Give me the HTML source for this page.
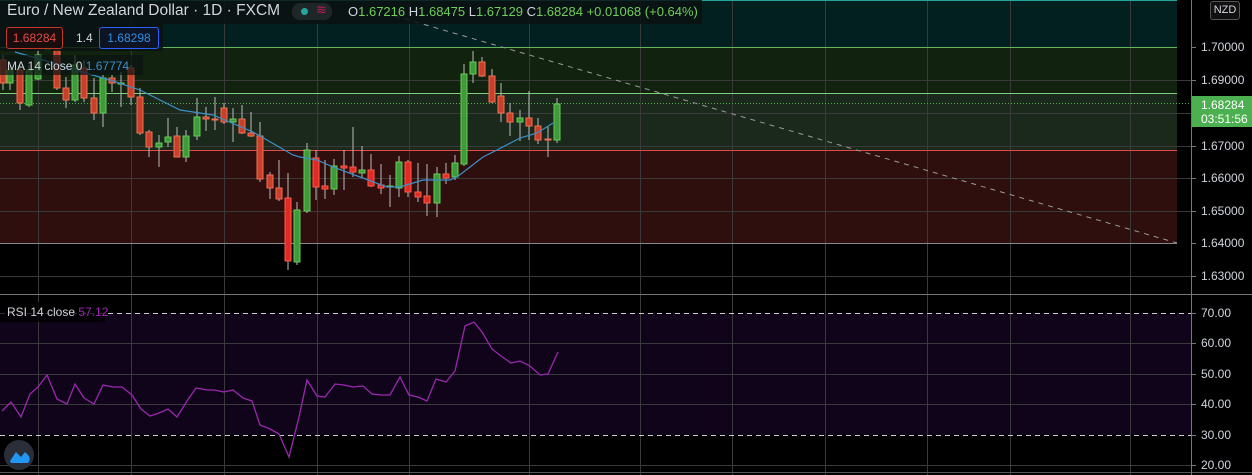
<!DOCTYPE html>
<html><head><meta charset="utf-8"><style>
html,body{margin:0;padding:0;background:#000;width:1252px;height:475px;overflow:hidden;font-family:"Liberation Sans",sans-serif}
svg{position:absolute;left:0;top:0}
.t{position:absolute;white-space:nowrap}
</style></head><body>
<svg width="1252" height="475" xmlns="http://www.w3.org/2000/svg">
<rect x="0" y="0" width="1177" height="47" fill="#032020"/>
<rect x="0" y="47" width="1177" height="46" fill="#11220f"/>
<rect x="0" y="93" width="1177" height="57" fill="#1a291b"/>
<rect x="0" y="150" width="1177" height="93" fill="#2e0f0e"/>
<rect x="0" y="313" width="1191" height="122" fill="#0f0419"/>
<g stroke="#3a3a3a" stroke-width="1">
<line x1="0" y1="80.5" x2="1191" y2="80.5"/><line x1="0" y1="113.5" x2="1191" y2="113.5"/>
<line x1="0" y1="146.5" x2="1191" y2="146.5"/><line x1="0" y1="178.5" x2="1191" y2="178.5"/>
<line x1="0" y1="211.5" x2="1191" y2="211.5"/><line x1="0" y1="276.5" x2="1191" y2="276.5"/>
<line x1="0" y1="343.5" x2="1191" y2="343.5"/><line x1="0" y1="374.5" x2="1191" y2="374.5"/>
<line x1="0" y1="404.5" x2="1191" y2="404.5"/><line x1="0" y1="465.5" x2="1191" y2="465.5"/>
<line x1="38.5" y1="0" x2="38.5" y2="475"/><line x1="131.5" y1="0" x2="131.5" y2="475"/>
<line x1="224.5" y1="0" x2="224.5" y2="475"/><line x1="317.5" y1="0" x2="317.5" y2="475"/>
<line x1="409.5" y1="0" x2="409.5" y2="475"/><line x1="529.5" y1="0" x2="529.5" y2="475"/>
<line x1="640.5" y1="0" x2="640.5" y2="475"/><line x1="732.5" y1="0" x2="732.5" y2="475"/>
<line x1="825.5" y1="0" x2="825.5" y2="475"/><line x1="927.5" y1="0" x2="927.5" y2="475"/>
<line x1="1010.5" y1="0" x2="1010.5" y2="475"/><line x1="1130.5" y1="0" x2="1130.5" y2="475"/>
</g>
<line x1="0" y1="0.5" x2="1177" y2="0.5" stroke="#26a69a"/>
<line x1="0" y1="47.5" x2="1177" y2="47.5" stroke="#5fb85c"/>
<line x1="0" y1="93.5" x2="1177" y2="93.5" stroke="#7fcf7a"/>
<line x1="0" y1="150.5" x2="1177" y2="150.5" stroke="#e04b45"/>
<line x1="0" y1="243.5" x2="1177" y2="243.5" stroke="#888"/>
<line x1="0" y1="294.5" x2="1252" y2="294.5" stroke="#777"/>
<line x1="0" y1="472.5" x2="1252" y2="472.5" stroke="#555"/>
<line x1="1191.5" y1="0" x2="1191.5" y2="475" stroke="#777"/>
<line x1="0" y1="313.5" x2="1191" y2="313.5" stroke="#ccc" stroke-dasharray="5,4"/>
<line x1="0" y1="435.5" x2="1191" y2="435.5" stroke="#ccc" stroke-dasharray="5,4"/>
<line x1="0" y1="103.5" x2="1191" y2="103.5" stroke="#4caf50" stroke-dasharray="1,2"/>
<line x1="395" y1="16" x2="1177" y2="243" stroke="#999" stroke-dasharray="5,5"/>
<g stroke="#777"><line x1="1191" y1="47.5" x2="1196" y2="47.5"/><line x1="1191" y1="80.5" x2="1196" y2="80.5"/><line x1="1191" y1="146.5" x2="1196" y2="146.5"/><line x1="1191" y1="178.5" x2="1196" y2="178.5"/><line x1="1191" y1="211.5" x2="1196" y2="211.5"/><line x1="1191" y1="243.5" x2="1196" y2="243.5"/><line x1="1191" y1="276.5" x2="1196" y2="276.5"/><line x1="1191" y1="313.5" x2="1196" y2="313.5"/><line x1="1191" y1="343.5" x2="1196" y2="343.5"/><line x1="1191" y1="374.5" x2="1196" y2="374.5"/><line x1="1191" y1="404.5" x2="1196" y2="404.5"/><line x1="1191" y1="435.5" x2="1196" y2="435.5"/><line x1="1191" y1="465.5" x2="1196" y2="465.5"/></g>
<g stroke="#bbb" stroke-width="1">
<line x1="3" y1="55" x2="3" y2="90"/><line x1="10" y1="65" x2="10" y2="90"/><line x1="20" y1="65" x2="20" y2="110"/><line x1="29" y1="65" x2="29" y2="107"/><line x1="38" y1="50" x2="38" y2="80"/><line x1="57" y1="45" x2="57" y2="90"/><line x1="66" y1="77" x2="66" y2="108"/><line x1="75" y1="55" x2="75" y2="102"/><line x1="84" y1="60" x2="84" y2="102"/><line x1="94" y1="78" x2="94" y2="120"/><line x1="103" y1="75" x2="103" y2="127"/><line x1="112" y1="75" x2="112" y2="92"/><line x1="121" y1="72" x2="121" y2="107"/><line x1="131" y1="65" x2="131" y2="105"/><line x1="140" y1="88" x2="140" y2="135"/><line x1="149" y1="130" x2="149" y2="157"/><line x1="159" y1="135" x2="159" y2="167"/><line x1="168" y1="118" x2="168" y2="147"/><line x1="177" y1="127" x2="177" y2="157"/><line x1="186" y1="130" x2="186" y2="162"/><line x1="197" y1="98" x2="197" y2="140"/><line x1="206" y1="107" x2="206" y2="131"/><line x1="215" y1="97" x2="215" y2="130"/><line x1="224" y1="103" x2="224" y2="124"/><line x1="233" y1="108" x2="233" y2="142"/><line x1="242" y1="105" x2="242" y2="134"/><line x1="251" y1="112" x2="251" y2="137"/><line x1="260" y1="122" x2="260" y2="182"/><line x1="270" y1="172" x2="270" y2="199"/><line x1="279" y1="160" x2="279" y2="201"/><line x1="288" y1="173" x2="288" y2="270"/>
<line x1="297" y1="202" x2="297" y2="265"/><line x1="307" y1="143" x2="307" y2="213"/><line x1="316" y1="150" x2="316" y2="200"/><line x1="325" y1="160" x2="325" y2="199"/><line x1="334" y1="159" x2="334" y2="195"/><line x1="344" y1="150" x2="344" y2="190"/><line x1="353" y1="127" x2="353" y2="177"/><line x1="362" y1="146" x2="362" y2="178"/><line x1="371" y1="154" x2="371" y2="187"/><line x1="381" y1="164" x2="381" y2="194"/><line x1="390" y1="175" x2="390" y2="207"/><line x1="399" y1="156" x2="399" y2="197"/><line x1="408" y1="160" x2="408" y2="197"/><line x1="418" y1="163" x2="418" y2="202"/><line x1="427" y1="164" x2="427" y2="216"/><line x1="437" y1="167" x2="437" y2="217"/><line x1="446" y1="163" x2="446" y2="184"/><line x1="455" y1="155" x2="455" y2="180"/><line x1="464" y1="64" x2="464" y2="166"/><line x1="473" y1="51" x2="473" y2="83"/><line x1="482" y1="57" x2="482" y2="77"/><line x1="492" y1="69" x2="492" y2="103"/><line x1="501" y1="83" x2="501" y2="122"/><line x1="510" y1="103" x2="510" y2="136"/><line x1="520" y1="110" x2="520" y2="141"/><line x1="529" y1="91" x2="529" y2="140"/><line x1="538" y1="118" x2="538" y2="144"/><line x1="548" y1="127" x2="548" y2="157"/><line x1="557" y1="98" x2="557" y2="143"/>
</g>
<g stroke-width="1">
<g fill="#c8402c" stroke="#f07050">
<rect x="0" y="60" width="6" height="23"/><rect x="17" y="70" width="6" height="33"/><rect x="54" y="50" width="6" height="38"/><rect x="63" y="88" width="6" height="12"/><rect x="81" y="68" width="6" height="30"/><rect x="91" y="98" width="6" height="15"/><rect x="109" y="78" width="6" height="5"/><rect x="128" y="68" width="6" height="29"/><rect x="137" y="97" width="6" height="36"/><rect x="146" y="132" width="6" height="15"/><rect x="174" y="136" width="6" height="21"/><rect x="203" y="117" width="6" height="2"/><rect x="212" y="119" width="6" height="1"/><rect x="221" y="108" width="6" height="14"/><rect x="239" y="119" width="6" height="14"/><rect x="248" y="133" width="6" height="3"/><rect x="257" y="136" width="6" height="43"/><rect x="267" y="175" width="6" height="13"/><rect x="276" y="188" width="6" height="11"/>
</g>
<g fill="#e02a22" stroke="#ff5a4a">
<rect x="285" y="198" width="6" height="63"/><rect x="313" y="158" width="6" height="29"/><rect x="322" y="186" width="6" height="3"/><rect x="341" y="166" width="6" height="2"/><rect x="350" y="167" width="6" height="5"/><rect x="368" y="170" width="6" height="16"/><rect x="378" y="185" width="6" height="3"/><rect x="405" y="162" width="6" height="30"/><rect x="415" y="192" width="6" height="5"/><rect x="424" y="196" width="6" height="7"/><rect x="443" y="174" width="6" height="4"/>
</g>
<g fill="#c8402c" stroke="#f07050">
<rect x="479" y="62" width="6" height="14"/><rect x="489" y="76" width="6" height="26"/><rect x="498" y="96" width="6" height="17"/><rect x="507" y="113" width="6" height="9"/><rect x="526" y="118" width="6" height="8"/><rect x="535" y="126" width="6" height="14"/><rect x="545" y="139" width="6" height="1"/>
</g>
<g fill="#3f9a3a" stroke="#66cc55">
<rect x="7" y="70" width="6" height="13"/><rect x="26" y="70" width="6" height="35"/><rect x="35" y="55" width="6" height="24"/><rect x="45" y="30" width="6" height="20"/><rect x="72" y="65" width="6" height="35"/><rect x="100" y="78" width="6" height="35"/><rect x="118" y="83" width="6" height="1"/><rect x="156" y="143" width="6" height="4"/><rect x="165" y="137" width="6" height="5"/><rect x="183" y="136" width="6" height="21"/><rect x="194" y="117" width="6" height="19"/><rect x="230" y="119" width="6" height="3"/>
<rect x="294" y="210" width="6" height="52"/><rect x="304" y="150" width="6" height="61"/><rect x="331" y="166" width="6" height="23"/><rect x="359" y="170" width="6" height="3"/><rect x="387" y="186" width="6" height="1"/><rect x="396" y="162" width="6" height="26"/><rect x="434" y="174" width="6" height="29"/><rect x="452" y="163" width="6" height="14"/><rect x="461" y="74" width="6" height="90"/><rect x="470" y="62" width="6" height="12"/><rect x="517" y="118" width="6" height="4"/><rect x="554" y="104" width="6" height="36"/>
</g>
</g>
<polyline fill="none" stroke="#3c8fc9" stroke-width="1.2" points="15,52 50,62 75,70 110,80 140,90 180,110 213,115 253,132 293,155 300,157 317,160 333,167 360,177 387,187 400,187 413,183 423,180 450,180 457,177 470,167 483,157 497,150 520,138 537,133 553,123"/>
<polyline fill="none" stroke="#9c27b0" stroke-width="1.3" points="2,411 11,402 21,417 30,394 38,387 47,375 57,399 67,404 75,384 84,398 94,404 103,385 113,387 122,387 132,395 141,409 150,416 159,413 168,409 177,417 187,401 196,388 207,390 214,390 224,392 233,390 243,398 252,401 260,425 270,429 279,434 289,457 299,417 307,380 317,396 325,397 335,384 344,385 353,387 363,386 372,394 381,395 390,395 400,377 409,395 418,397 427,401 436,379 446,382 455,371 465,326 474,322 482,332 492,349 501,356 511,363 520,361 530,366 540,375 548,374 558,352"/>
<circle cx="19" cy="455" r="15" fill="#2a2e39"/>
<path d="M10,461 L16,452 L21,457 L25,452 L29,456 Q31,462 27,463 L11,463 Z" fill="#2196f3"/>
</svg>
<div class="t" style="left:0;top:0;width:702px;height:24px;background:rgba(10,18,18,0.85)"></div>
<div class="t" style="left:7px;top:2px;font-size:15.5px;color:#d1d4dc">Euro / New Zealand Dollar · 1D · FXCM</div>
<div class="t" style="left:292px;top:3px;width:40px;height:17px;background:#1f2628;border-radius:8px"></div>
<div class="t" style="left:301px;top:8px;width:7px;height:7px;border-radius:50%;background:#26a69a"></div>
<div class="t" style="left:316px;top:2px;font-size:13px;color:#c2185b">≋</div>
<div class="t" style="left:348px;top:4px;font-size:13px;color:#6fcf5a"><span style="color:#d1d4dc">O</span>1.67216 <span style="color:#d1d4dc">H</span>1.68475 <span style="color:#d1d4dc">L</span>1.67129 <span style="color:#d1d4dc">C</span>1.68284 +0.01068 (+0.64%)</div>
<div class="t" style="left:0;top:24px;width:163px;height:27px;background:rgba(10,18,18,0.85)"></div>
<div class="t" style="left:6px;top:27px;width:55px;height:20px;border:1px solid #c0392b;border-radius:3px;background:#1a0d0d;color:#e04b45;font-size:12px;line-height:20px;text-align:center">1.68284</div>
<div class="t" style="left:76px;top:31px;font-size:12px;color:#d1d4dc">1.4</div>
<div class="t" style="left:99px;top:27px;width:58px;height:20px;border:1px solid #2962ff;border-radius:3px;background:#0d1426;color:#2e8fe0;font-size:12px;line-height:20px;text-align:center">1.68298</div>
<div class="t" style="left:0;top:55px;width:143px;height:20px;background:rgba(10,18,18,0.7)"></div>
<div class="t" style="left:7px;top:59px;font-size:12px;color:#d1d4dc">MA 14 close 0 <span style="color:#3c8fc9">1.67774</span></div>
<div class="t" style="left:0;top:302px;width:105px;height:20px;background:rgba(0,0,0,0.8)"></div>
<div class="t" style="left:7px;top:305px;font-size:12px;color:#d1d4dc">RSI 14 close <span style="color:#9c27b0">57.12</span></div>
<div class="t" style="left:1210px;top:1px;width:28px;height:17px;border:1px solid #555;border-radius:3px;background:#111;font-size:11px;color:#d1d4dc;text-align:center;line-height:17px">NZD</div>
<div style="position:absolute;left:1201px;top:0;font-size:12px;color:#d1d4dc;line-height:12px">
<div class="t" style="top:41px">1.70000</div><div class="t" style="top:74px">1.69000</div><div class="t" style="top:140px">1.67000</div><div class="t" style="top:172px">1.66000</div><div class="t" style="top:205px">1.65000</div><div class="t" style="top:237px">1.64000</div><div class="t" style="top:270px">1.63000</div>
<div class="t" style="top:307px">70.00</div><div class="t" style="top:337px">60.00</div><div class="t" style="top:368px">50.00</div><div class="t" style="top:398px">40.00</div><div class="t" style="top:429px">30.00</div><div class="t" style="top:459px">20.00</div>
</div>
<div class="t" style="left:1192px;top:96px;width:60px;height:31px;background:#4caf50;color:#fff;font-size:12px;line-height:14px;padding-left:9px;box-sizing:border-box;padding-top:2px">1.68284<br>03:51:56</div>
</body></html>
